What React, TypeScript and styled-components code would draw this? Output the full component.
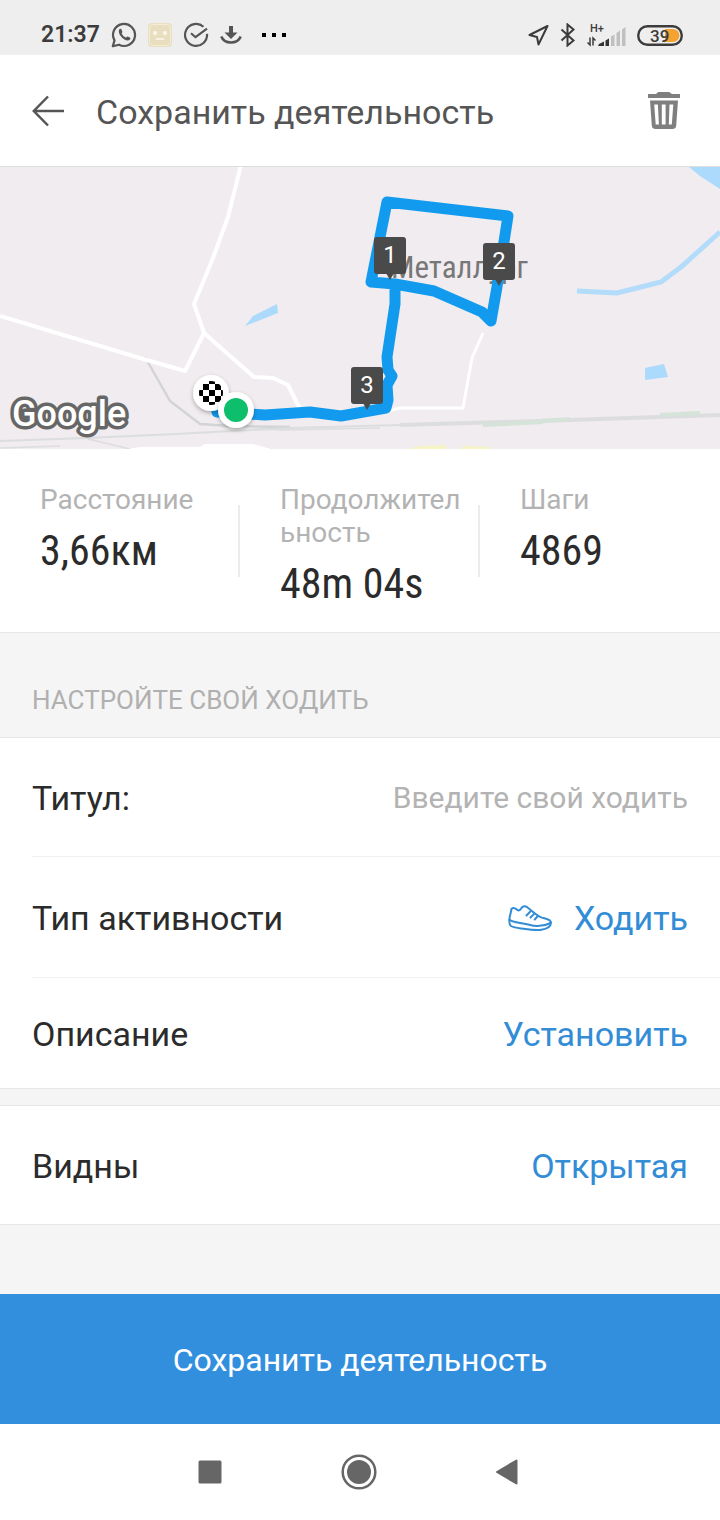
import React from "react";
import styled, { createGlobalStyle } from "styled-components";

const GlobalStyle = createGlobalStyle`
  * { box-sizing: border-box; }
  body {
    margin: 0;
    background: #f5f5f5;
    font-family: Roboto, "Noto Sans", sans-serif;
    color: #2b2b2b;
  }
  button, input { font: inherit; color: inherit; }
`;

const narrow = `"Roboto Condensed", "Liberation Sans Narrow", Roboto, sans-serif`;

const Screen = styled.div`
  display: flex;
  flex-direction: column;
  min-height: 100vh;
`;

const StatusBar = styled.div`
  display: flex;
  align-items: flex-end;
  justify-content: space-between;
  height: 55px;
  padding: 0 37px 6px 41px;
  background: #eeeeee;
  color: #3c3c3c;
`;

const StatusGroup = styled.div`
  display: flex;
  align-items: center;
  gap: 11px;
  height: 28px;
`;

const Clock = styled.time`
  font-size: 23px;
  line-height: 28px;
  font-weight: 600;
`;

const MoreIcon = styled.svg`
  margin-left: 8px;
`;

const AppBar = styled.header`
  display: flex;
  align-items: center;
  height: 112px;
  padding: 0 40px 0 32px;
  background: #ffffff;
  border-bottom: 1px solid #dedede;
`;

const IconButton = styled.button`
  display: flex;
  padding: 0;
  border: 0;
  background: none;
  cursor: pointer;
`;

const AppTitle = styled.h1`
  flex: 1;
  margin: 0 0 0 32px;
  padding-top: 2px;
  font-size: 34px;
  line-height: 40px;
  font-weight: 400;
  color: #555555;
`;

const MapView = styled.svg`
  display: block;
  width: 100%;
  height: 282px;
  background: #f0ecef;
`;

const Stats = styled.section`
  display: grid;
  grid-template-columns: repeat(3, 1fr);
  padding: 34px 0 23px;
  background: #ffffff;
  border-bottom: 1px solid #e6e6e6;
`;

const Stat = styled.div`
  position: relative;
  padding: 0 18px 0 40px;
  & + &::before {
    content: "";
    position: absolute;
    left: -2px;
    top: 22px;
    width: 2px;
    height: 72px;
    background: #ebebeb;
  }
`;

const StatLabel = styled.div`
  font-size: 28px;
  line-height: 33px;
  color: #b3b3b3;
  word-break: break-all;
`;

const StatValue = styled.div`
  margin-top: 10px;
  font-family: ${narrow};
  font-size: 42px;
  line-height: 50px;
  color: #2b2b2b;
`;

const SectionTitle = styled.h2`
  margin: 0;
  padding: 51px 32px 21px;
  font-size: 26px;
  line-height: 32px;
  font-weight: 400;
  color: #b0b0b0;
`;

const Card = styled.section`
  background: #ffffff;
  border-top: 1px solid #e6e6e6;
  border-bottom: 1px solid #e6e6e6;
  & + & { margin-top: 16px; }
`;

const Row = styled.div<{ $height: number }>`
  display: flex;
  align-items: center;
  justify-content: space-between;
  height: ${(p) => p.$height}px;
  margin-left: 32px;
  padding: 2px 32px 0 0;
  font-size: 34px;
  line-height: 40px;
  & + & { border-top: 1px solid #f2f2f2; }
`;

const TitleInput = styled.input`
  flex: 1;
  min-width: 0;
  padding: 0;
  border: 0;
  outline: 0;
  background: none;
  text-align: right;
  font-size: 30px;
  line-height: 40px;
  &::placeholder { color: #b3b3b3; opacity: 1; }
`;

const ValueButton = styled.button`
  display: flex;
  align-items: center;
  gap: 22px;
  padding: 0;
  border: 0;
  background: none;
  color: #328cd6;
  cursor: pointer;
`;

const SaveButton = styled.button`
  height: 130px;
  margin-top: 69px;
  padding: 2px 0 0;
  border: 0;
  background: #328fde;
  color: #ffffff;
  font-size: 32px;
  line-height: 40px;
  cursor: pointer;
`;

const NavBar = styled.nav`
  display: flex;
  flex: 1;
  align-items: center;
  justify-content: center;
  gap: 119px;
  min-height: 96px;
  padding-right: 2px;
  background: #ffffff;
`;

const WhatsAppIcon = () => (
  <svg width="26" height="26" viewBox="0 0 26 26" fill="none" stroke="#555" strokeWidth="2.2">
    <path d="M1.8 24.2l1.7-5.8A11 11 0 1 1 8 22.7z" strokeLinejoin="round" />
    <path d="M8.4 7.2c.8-.8 1.7-.6 2 .1l1 2.4c.2.6-.9 1.4-.7 1.8 1 2 2.1 3.1 4.1 3.9.6.2 1.2-1.1 1.8-.9l2.3 1.1c.8.4.6 1.3 0 2-3.800 4-13.700-6-10.500-10.400z" fill="#555" stroke="none" />
  </svg>
);

const FaceIcon = () => (
  <svg width="24" height="24" viewBox="0 0 24 24">
    <rect width="24" height="24" rx="4" fill="#e9dfc0" />
    <rect x="1.5" y="1.5" width="21" height="21" rx="3" fill="none" stroke="#f3ecd6" />
    <circle cx="7" cy="10" r="2" fill="#fbf8ee" />
    <circle cx="17" cy="10" r="2" fill="#fbf8ee" />
    <path d="M8 16h8" stroke="#fbf8ee" strokeWidth="1.5" />
  </svg>
);

const CheckIcon = () => (
  <svg width="26" height="26" viewBox="0 0 26 26" fill="none" stroke="#555" strokeWidth="2.2">
    <path d="M20.500 4.800A11 11 0 1 0 24 11.800" />
    <path d="M8 11.200l4.500 4L24 6.600" />
  </svg>
);

const DownloadIcon = () => (
  <svg width="22" height="20" viewBox="0 0 22 20" fill="none" stroke="#555">
    <path d="M11 1v8" strokeWidth="4" />
    <path d="M4.500 7.500h13L11 14z" fill="#555" stroke="none" />
    <path d="M1.300 11.500C4.500 19.500 17.500 19.500 20.700 11.500" strokeWidth="2.600" />
  </svg>
);

const DotsIcon = () => (
  <MoreIcon width="26" height="4" viewBox="0 0 26 4">
    <path d="M1 0h4v4H1zM11 0h4v4h-4zM21 0h4v4h-4z" />
  </MoreIcon>
);

const LocationIcon = () => (
  <svg width="21" height="21" viewBox="0 0 21 21" fill="none" stroke="#3c3c3c" strokeWidth="2">
    <path d="M19.500 1L1.500 10l7.500 2L10.500 19.500z" strokeLinejoin="round" />
  </svg>
);

const BluetoothIcon = () => (
  <svg width="16" height="24" viewBox="0 0 16 24" fill="none" stroke="#3c3c3c" strokeWidth="2">
    <path d="M1.500 6.500l12 11L7.500 22.500v-21l6 5-12 11" />
  </svg>
);

const SignalIcon = () => (
  <svg width="39" height="25" viewBox="0 0 39 25">
    <text x="3" y="9" fontFamily="Roboto, sans-serif" fontSize="11" fontWeight="500" fill="#3c3c3c">H+</text>
    <path d="M3 14.500v7.500L.5 19.500M6 22.500V15l2.500 2.500" fill="none" stroke="#3c3c3c" strokeWidth="1.500" />
    <path d="M11 23l1-2 5-2.500V23zM18.500 17.500l3.500-2V23h-3.500z" fill="#333" />
    <path d="M24 13.500l3.500-2V23H24zM29.500 10l3.500-2.500V23h-3.500zM35 6.500l3.500-2.500V23H35z" fill="#c0c0c0" />
  </svg>
);

const BatteryIcon = () => (
  <svg width="46" height="21" viewBox="0 0 46 21">
    <rect x="1.200" y="1.200" width="43.600" height="18.600" rx="9.300" fill="none" stroke="#3c3c3c" strokeWidth="2.400" />
    <path d="M28 4h8a6.500 6.500 0 0 1 0 13h-8z" fill="#f5a233" />
    <text x="13" y="16.800" fontFamily="Roboto, sans-serif" fontSize="17" fontWeight="500" fill="#3c3c3c">39</text>
  </svg>
);

const BackIcon = () => (
  <svg width="32" height="32" viewBox="0 0 32 32" fill="none" stroke="#555" strokeWidth="2.500">
    <path d="M32 16H2M16 1.500L1.800 16 16 30.500" />
  </svg>
);

const TrashIcon = () => (
  <svg width="32" height="37" viewBox="0 0 32 37" fill="#7f7f7f">
    <path d="M0 2h7.500C9 2 9 0 11 0h9.500c2 0 2 2 4 2H32v4H0z" />
    <path
      fillRule="evenodd"
      d="M2 8.500h28l-1.800 25c-.2 2-1.200 3.500-3.700 3.500h-17C5 37 4 35.500 3.800 33.500zM6.200 12.500l1.500 20h3.200l-1-20zM13.800 12.500v20h3.800v-20zM21.500 12.500l-.7 20h3l1.500-20z"
    />
  </svg>
);

const ShoeIcon = () => (
  <svg width="44" height="26" viewBox="0 0 44 26" fill="none" stroke="#328cd6" strokeWidth="2" strokeLinecap="round" strokeLinejoin="round">
    <path d="M3.500 3.800C5 2.600 7 2.900 8.400 4.300c1.600 1.600 3.400 1.500 4.600-.6 1-2.100 3.600-3.200 6.200-1.500C24 5.600 28.500 10.800 34 12.600c4 1.200 8.600 1.700 8.900 4.600.3 4.200-4.200 6.600-9.500 7.500-4.600.8-10.500.1-16-.7C12 23.100 6.500 23 3 21 1 19.800 1.300 17 1.400 14.500 1.600 10.500 3 8 3.500 3.800z" />
    <path d="M1.500 14.800c4 2.200 8.500 3 13.500 3.600 6 .8 9 2.700 14.500 2.500 5-.2 9.500-1 13.200-3.300M18.500 10.500l3.800-4M22.500 12.500l3.600-3.600M26.700 14.500l3.200-3.500" />
  </svg>
);

const RecentsIcon = () => (
  <svg width="24" height="24" viewBox="0 0 24 24"><rect x="0.500" y="0.500" width="23" height="23" rx="1.500" fill="#666" /></svg>
);

const HomeIcon = () => (
  <svg width="36" height="36" viewBox="0 0 36 36">
    <circle cx="18" cy="18" r="16.300" fill="none" stroke="#666" strokeWidth="2.500" />
    <circle cx="18" cy="18" r="12" fill="#666" />
  </svg>
);

const NavBackIcon = () => (
  <svg width="24" height="26" viewBox="0 0 24 26">
    <path d="M1 13L20.500 1.500v23z" fill="#666" stroke="#666" strokeWidth="2" strokeLinejoin="round" />
  </svg>
);

const KmMarker = ({ x, y, label }: { x: number; y: number; label: string }) => (
  <g transform={`translate(${x} ${y})`}>
    <rect x="-16" y="-43" width="32" height="37" rx="3" fill="#4a4a4a" />
    <path d="M-4-7h8l-4 7z" fill="#4a4a4a" />
    <text y="-17" textAnchor="middle" fontFamily="Roboto, sans-serif" fontSize="24" fill="#fff">{label}</text>
  </g>
);

const RouteMap = () => (
  <MapView viewBox="0 0 720 282" preserveAspectRatio="xMidYMid slice" role="img" aria-label="Карта">
    <defs>
      <filter id="pinShadow" x="-30%" y="-30%" width="160%" height="170%">
        <feDropShadow dx="0" dy="2" stdDeviation="2" floodOpacity="0.3" />
      </filter>
      <pattern id="checks" width="12" height="12" patternUnits="userSpaceOnUse" x="203" y="217">
        <rect width="12" height="12" fill="#fff" />
        <path d="M0 0h6v6H0zM6 6h6v6H6z" fill="#000" />
      </pattern>
    </defs>
    <g fill="#acdafd">
      <path d="M245 159l8-10 24-12 1 9z" />
      <path d="M689 0h31v22L700 9z" />
      <path d="M645 201l19-4 4 13-23 3z" />
    </g>
    <path d="M577 124l40 2 20-5 24-6 20-15 39-35" fill="none" stroke="#b3dcfb" strokeWidth="5" />
    <g fill="none" stroke="#dcddde" strokeWidth="2">
      <path d="M145 190l25 44 30 23 30 2 60 1" stroke="#d3d4d6" strokeWidth="2.500" />
      <path d="M0 274l87-3 88-4 115-6 110-3" />
      <path d="M400 258l140-4 180-6" strokeWidth="4" />
      <path d="M0 281l60-2M88 272l42 10M220 258l60 5 100-2" strokeWidth="1.500" />
    </g>
    <path d="M483 258l60-3M540 254l30-2M660 248l40-2" fill="none" stroke="#d5e3d8" strokeWidth="4" />
    <path d="M408 282l12-3 26-1v4zM465 279l25 1v2h-30z" fill="#f4f4c4" />
    <path d="M128 282l12-2 60 0 5-3 48 0 18 5z" fill="#fff" />
    <g fill="none" stroke="#fff" strokeWidth="4" strokeLinejoin="round">
      <path d="M241-2l-13 52-15 41-19 46 10 29-19 38-45-13L0 149" />
      <path d="M204 166l50 44 19 1 15 7 12 24" />
      <path d="M483 166l-11 25-9 50h-63l-12 3" strokeWidth="3" />
    </g>
    <text x="391" y="111" fontFamily={narrow} fontSize="31" fill="#777">Металлург</text>
    <path
      d="M371 115L387 35 508 49 497 120 491 154 482 145 434 124 395 117 371 115M395 119L395 137 387 190 388 203 392 209 387 218 388 233 386 241 341 249 310 245 265 248 217 245"
      fill="none" stroke="#129bee" strokeWidth="11" strokeLinejoin="round" strokeLinecap="round"
    />
    <KmMarker x={390} y={113} label="1" />
    <KmMarker x={499} y={119} label="2" />
    <KmMarker x={367} y={243} label="3" />
    <circle cx="211" cy="226" r="18" fill="#fff" filter="url(#pinShadow)" />
    <circle cx="211" cy="226" r="12" fill="url(#checks)" />
    <circle cx="236" cy="243" r="18" fill="#fff" filter="url(#pinShadow)" />
    <circle cx="236" cy="243" r="12" fill="#0dbf6b" />
    <text
      x="12" y="259" fontFamily="Roboto, sans-serif" fontSize="36" fontWeight="500"
      fill="#fff" stroke="#666" strokeWidth="7" strokeLinejoin="round" paintOrder="stroke"
    >
      Google
    </text>
  </MapView>
);

const stats = [
  { label: "Расстояние", value: "3,66км" },
  { label: "Продолжительность", value: "48m 04s" },
  { label: "Шаги", value: "4869" },
];

export default function App() {
  return (
    <>
      <GlobalStyle />
      <Screen>
        <StatusBar>
          <StatusGroup>
            <Clock>21:37</Clock>
            <WhatsAppIcon />
            <FaceIcon />
            <CheckIcon />
            <DownloadIcon />
            <DotsIcon />
          </StatusGroup>
          <StatusGroup>
            <LocationIcon />
            <BluetoothIcon />
            <SignalIcon />
            <BatteryIcon />
          </StatusGroup>
        </StatusBar>
        <AppBar>
          <IconButton type="button" aria-label="Назад"><BackIcon /></IconButton>
          <AppTitle>Сохранить деятельность</AppTitle>
          <IconButton type="button" aria-label="Удалить"><TrashIcon /></IconButton>
        </AppBar>
        <RouteMap />
        <Stats>
          {stats.map((s) => (
            <Stat key={s.label}>
              <StatLabel>{s.label}</StatLabel>
              <StatValue>{s.value}</StatValue>
            </Stat>
          ))}
        </Stats>
        <SectionTitle>НАСТРОЙТЕ СВОЙ ХОДИТЬ</SectionTitle>
        <Card>
          <Row $height={118}>
            <label htmlFor="title">Титул:</label>
            <TitleInput id="title" type="text" placeholder="Введите свой ходить" />
          </Row>
          <Row $height={121}>
            <span id="type-label">Тип активности</span>
            <ValueButton type="button" aria-describedby="type-label"><ShoeIcon />Ходить</ValueButton>
          </Row>
          <Row $height={111}>
            <span id="about-label">Описание</span>
            <ValueButton type="button" aria-describedby="about-label">Установить</ValueButton>
          </Row>
        </Card>
        <Card>
          <Row $height={118}>
            <span id="visible-label">Видны</span>
            <ValueButton type="button" aria-describedby="visible-label">Открытая</ValueButton>
          </Row>
        </Card>
        <SaveButton type="button">Сохранить деятельность</SaveButton>
        <NavBar>
          <IconButton type="button" aria-label="Недавние"><RecentsIcon /></IconButton>
          <IconButton type="button" aria-label="Домой"><HomeIcon /></IconButton>
          <IconButton type="button" aria-label="Назад"><NavBackIcon /></IconButton>
        </NavBar>
      </Screen>
    </>
  );
}
